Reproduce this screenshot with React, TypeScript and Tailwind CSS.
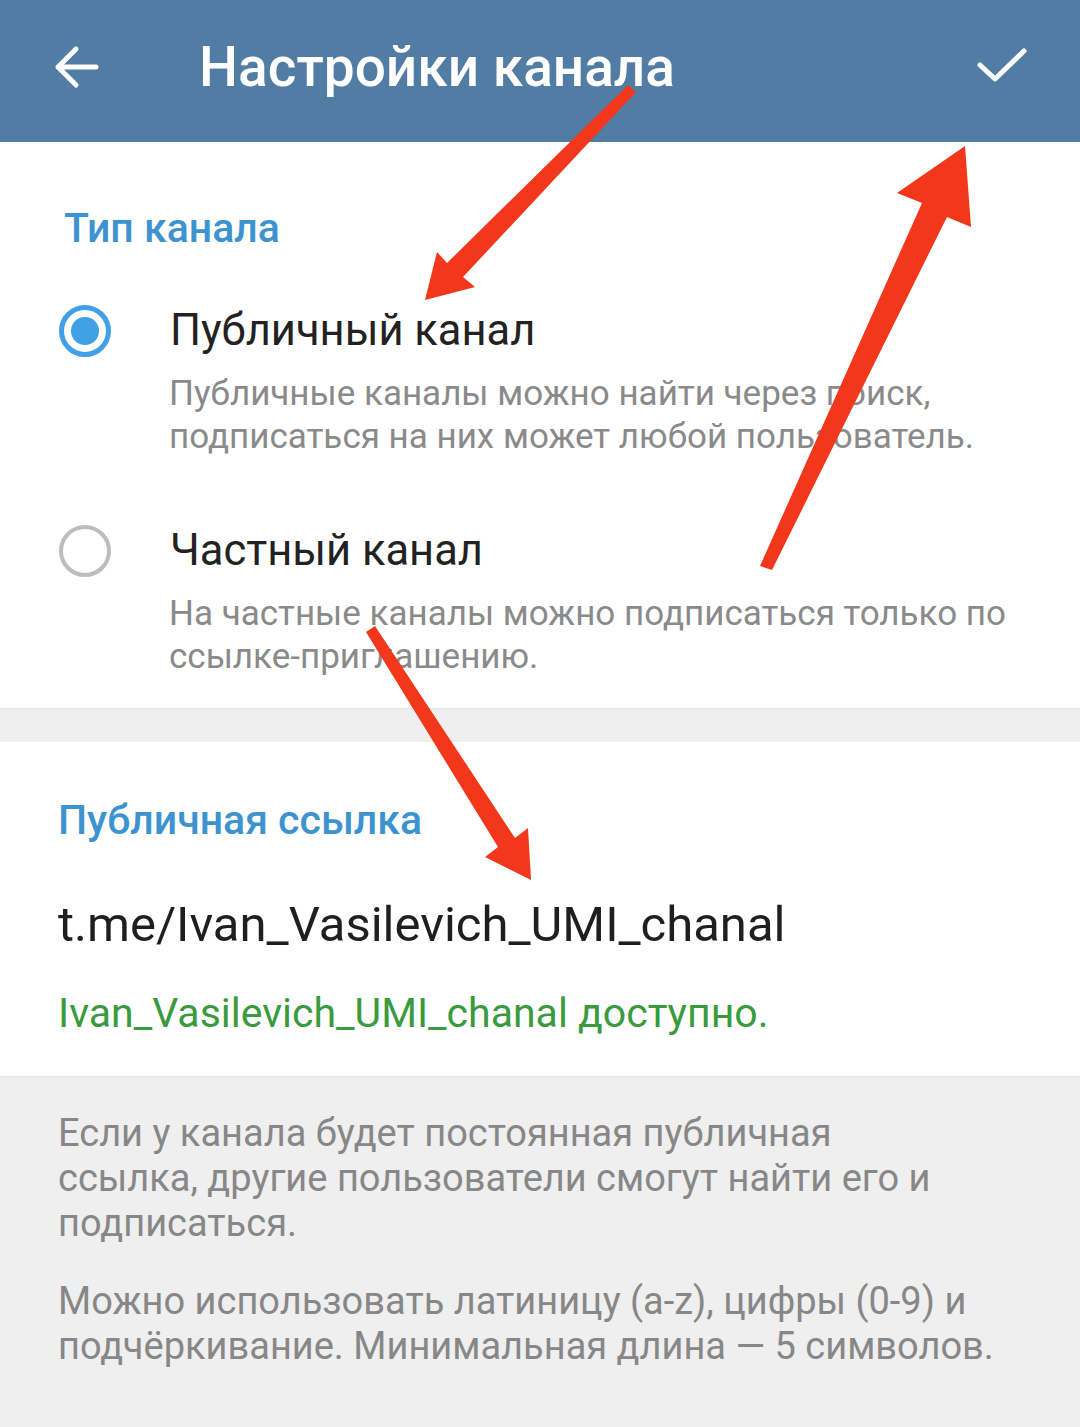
import React from "react";

const font = { fontFamily: "Roboto, 'Noto Sans', sans-serif" };

// Радиокнопка
const Radio: React.FC<{ checked?: boolean }> = ({ checked }) => (
  <div className="flex w-[170px] shrink-0 justify-center">
    {checked ? (
      <div className="flex h-[52px] w-[52px] items-center justify-center rounded-full border-[5px] border-[#41a0e6]">
        <div className="h-[28px] w-[28px] rounded-full bg-[#41a0e6]" />
      </div>
    ) : (
      <div className="h-[52px] w-[52px] rounded-full border-[4px] border-[#bdbdbd]" />
    )}
  </div>
);

const TypeOption: React.FC<{
  title: string;
  lines: string[];
  checked?: boolean;
  className?: string;
}> = ({ title, lines, checked, className }) => (
  <div className={className}>
    <div className="flex items-center">
      <Radio checked={checked} />
      <p className="text-[43.5px] leading-[50px] text-[#222222]">{title}</p>
    </div>
    <div className="mt-[15px] pl-[169px] text-[35px] leading-[43px] text-[#8a8a8a]">
      {lines.map((l) => (
        <p key={l}>{l}</p>
      ))}
    </div>
  </div>
);

// Красные стрелки поверх скриншота
const Arrows = () => (
  <svg
    className="pointer-events-none absolute inset-0"
    width="1080"
    height="1427"
    viewBox="0 0 1080 1427"
  >
    <g fill="#f3371a">
      <polygon points="628,85 636,92 463,277 475,287 425,300 437,252 447,263" />
      <polygon points="760,566 772,570 947,217 971,227 965,146 897,193 922,203" />
      <polygon points="366,632 375,626 515,838 528,828 531,880 485,857 498,847" />
    </g>
  </svg>
);

export default function App() {
  return (
    <div
      className="relative h-[1427px] w-[1080px] overflow-hidden bg-[#efefef]"
      style={font}
    >
      <header className="flex h-[142px] items-center bg-[#517ca3] pb-[8px] shadow-[0_1px_3px_rgba(0,0,0,0.15)]">
        <svg
          className="ml-[52px] h-[48px] w-[48px]"
          viewBox="0 0 48 48"
          fill="none"
          stroke="white"
          strokeWidth="5"
          strokeLinecap="round"
          strokeLinejoin="round"
        >
          <path d="M44 24H6M24 6L6 24l18 18" />
        </svg>
        <h1 className="ml-[99px] text-[55px] font-medium leading-none text-white">
          Настройки канала
        </h1>
        <svg
          className="ml-auto mr-[52px] h-[40px] w-[52px]"
          viewBox="0 0 52 40"
          fill="none"
          stroke="white"
          strokeWidth="5"
          strokeLinecap="round"
          strokeLinejoin="round"
        >
          <path d="M4 18l15 14L48 4" />
        </svg>
      </header>

      <section className="bg-white pb-[30px] pt-[64px]">
        <h2 className="pl-[64px] text-[41px] font-medium leading-[44px] text-[#3d93cf]">
          Тип канала
        </h2>
        <TypeOption
          className="mt-[55px]"
          checked
          title="Публичный канал"
          lines={[
            "Публичные каналы можно найти через поиск,",
            "подписаться на них может любой пользователь.",
          ]}
        />
        <TypeOption
          className="mt-[67px]"
          title="Частный канал"
          lines={[
            "На частные каналы можно подписаться только по",
            "ссылке-приглашению.",
          ]}
        />
      </section>

      <div className="h-[34px] border-t border-[#e4e4e4]" />

      <section className="bg-white px-[58px] pb-[40px] pt-[56px]">
        <h2 className="text-[41px] font-medium leading-[44px] text-[#3d93cf]">
          Публичная ссылка
        </h2>
        <p className="mt-[55px] text-[49px] leading-[56px] text-[#1f1f1f]">
          t.me/Ivan_Vasilevich_UMI_chanal
        </p>
        <p className="mt-[37px] text-[41px] leading-[46px] text-[#3a9a3e]">
          Ivan_Vasilevich_UMI_chanal доступно.
        </p>
      </section>

      <section className="border-t border-[#e4e4e4] px-[58px] pt-[34px] text-[38px] leading-[45px] text-[#878787]">
        <p>
          Если у канала будет постоянная публичная
          <br />
          ссылка, другие пользователи смогут найти его и
          <br />
          подписаться.
        </p>
        <p className="mt-[33px]">
          Можно использовать латиницу (a-z), цифры (0-9) и
          <br />
          подчёркивание. Минимальная длина — 5 символов.
        </p>
      </section>

      <Arrows />
    </div>
  );
}
